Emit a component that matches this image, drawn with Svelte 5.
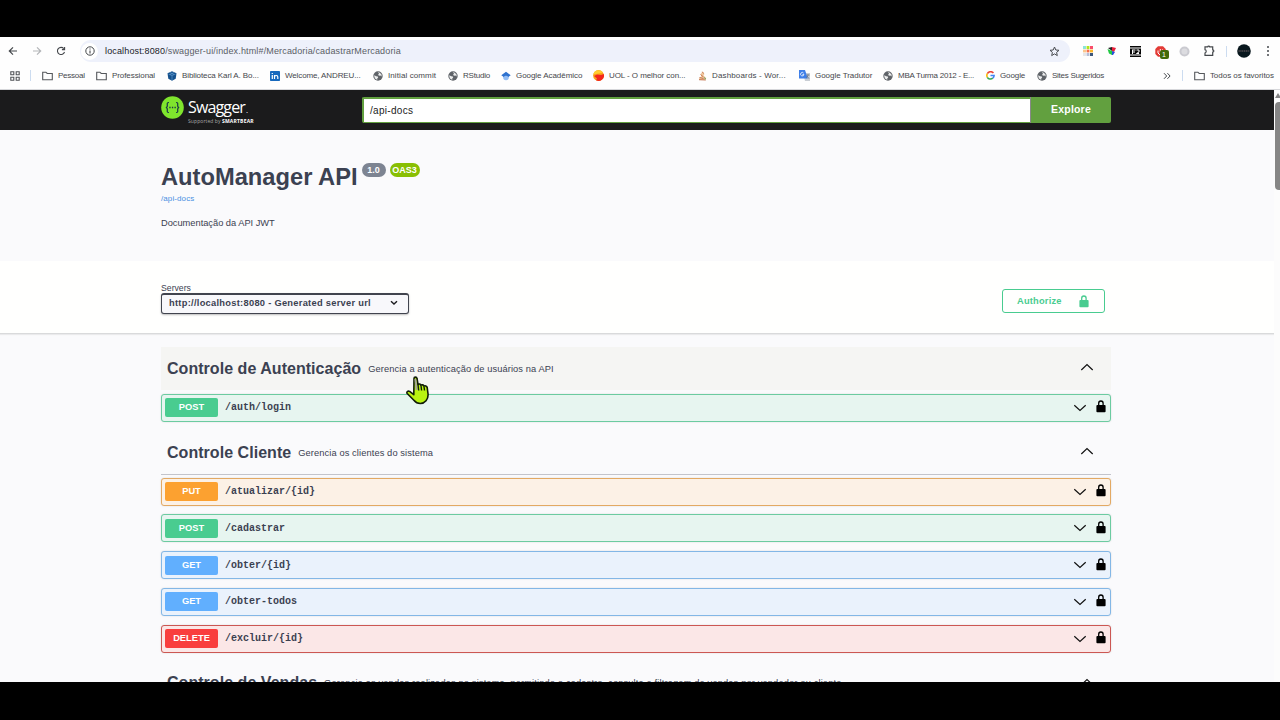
<script>
  const bookmarks = [
    { icon: 'folder', text: 'Pessoal', w: 54, sp: -0.25 },
    { icon: 'folder', text: 'Professional', w: 71, sp: -0.08 },
    { icon: 'cube', text: 'Biblioteca Karl A. Bo...', w: 103, sp: -0.1 },
    { icon: 'linkedin', text: 'Welcome, ANDREU...', w: 103, sp: -0.12 },
    { icon: 'globe', text: 'Initial commit', w: 75, sp: 0.1 },
    { icon: 'globe', text: 'RStudio', w: 53, sp: -0.2 },
    { icon: 'scholar', text: 'Google Acadêmico', w: 92, sp: -0.05 },
    { icon: 'uol', text: 'UOL - O melhor con...', w: 105, sp: -0.07 },
    { icon: 'jira', text: 'Dashboards - Wor...', w: 101, sp: 0.15 },
    { icon: 'translate', text: 'Google Tradutor', w: 84, sp: -0.03 },
    { icon: 'globe', text: 'MBA Turma 2012 - E...', w: 103, sp: -0.23 },
    { icon: 'google', text: 'Google', w: 51, sp: -0.1 },
    { icon: 'globe', text: 'Sites Sugeridos', w: 80, sp: -0.27 }
  ];
  const sections = [
    {
      title: 'Controle de Autenticação',
      text: 'Gerencia a autenticação de usuários na API',
      hover: true,
      ops: [{ method: 'POST', path: '/auth/login' }]
    },
    {
      title: 'Controle Cliente',
      text: 'Gerencia os clientes do sistema',
      ops: [
        { method: 'PUT', path: '/atualizar/{id}' },
        { method: 'POST', path: '/cadastrar' },
        { method: 'GET', path: '/obter/{id}' },
        { method: 'GET', path: '/obter-todos' },
        { method: 'DELETE', path: '/excluir/{id}' }
      ]
    },
    {
      title: 'Controle de Vendas',
      text: 'Gerencia as vendas realizadas no sistema, permitindo o cadastro, consulta e filtragem de vendas por vendedor ou cliente',
      ops: []
    }
  ];
</script>

{#snippet icon(name)}
  {#if name === 'folder'}
    <svg width="11" height="10" viewBox="0 0 11 10"><path d="M.7 1.2h3.2l1.3 1.3h5.1v6.3H.7z" fill="none" stroke="#55585c" stroke-width="1.1" /></svg>
  {:else if name === 'globe'}
    <svg width="10" height="10" viewBox="0 0 10 10"><circle cx="5" cy="5" r="4.7" fill="#5f6368" /><path d="M1.2 4.2l2 1 1.6.2.4 1.2-1 .9.2 1.3C2.500 8.500 1.200 6.800 1.200 4.200zM4.800 1.300l1.500.2 2.100 1.700.3 2.200-1.300-.9-1.500.2-.8-1.200 1-.7z" fill="#eceded" /></svg>
  {:else if name === 'cube'}
    <svg width="10" height="10" viewBox="0 0 10 10"><path d="M5 .3l4.500 2-.8 5.400L5 9.800 1.300 7.700.5 2.300z" fill="#14508c" /><path d="M1.500 3l3.500 1.500L8.500 3M5 4.500v4.800M3 1.500l4 2M7 1.500l-4 2" stroke="#6aa5d8" stroke-width=".6" fill="none" /></svg>
  {:else if name === 'linkedin'}
    <svg width="10" height="10" viewBox="0 0 10 10"><rect width="10" height="10" rx=".7" fill="#1769bd" /><path d="M2.300 4.100v4M2.300 2v1.100M4.500 8.100v-4M4.500 5.800c.3-1.800 3.300-1.800 3.300.3v2" fill="none" stroke="#fff" stroke-width="1.200" /></svg>
  {:else if name === 'scholar'}
    <svg width="10" height="10" viewBox="0 0 10 10"><circle cx="5" cy="6.500" r="2.800" fill="#93bdf4" /><path d="M5 .8l4.700 3.500L7.300 6a2.900 2.900 0 0 0-4.600 0L.3 4.300z" fill="#2f72cf" /></svg>
  {:else if name === 'uol'}
    <svg width="11" height="11" viewBox="0 0 11 11"><circle cx="5.500" cy="5.500" r="5.400" fill="#f9a01b" /><path d="M.4 4.200A5.400 5.400 0 0 1 10 2.500L6 3.500z" fill="#ffce2e" /><path d="M1 6l3-1.600L8 5l2.800-1A5.400 5.400 0 0 1 3 10.200L4 8.500z" fill="#f3281c" /></svg>
  {:else if name === 'jira'}
    <svg width="9" height="10" viewBox="0 0 9 10"><path d="M4.500.5L6.500 3 5.500 4.500 8.300 7 7 9H1.500L.8 7.800 3.500 5 2.700 3z" fill="#f0c9a0" /><path d="M1 8.700L7.800 9M4.400.8L5.500 2.500M2.500 3.500l3 2.500M1.500 6.500l4 1" stroke="#c06a43" stroke-width=".9" /><path d="M6 6.500l2 1.700" stroke="#6b9d57" /></svg>
  {:else if name === 'translate'}
    <svg width="11" height="11" viewBox="0 0 11 11"><path d="M4 3h7v8H6z" fill="#c9ced4" /><path d="M0 0h6l2.800 8.500H0z" fill="#3f7fe8" /><path d="M4.600 3.200a1.700 1.700 0 1 0 .3 1.300H3.500" fill="none" stroke="#fff" stroke-width=".8" /><path d="M7.500 5h3M9 4.400c0 2-1 3-2 3.600M8 6l2 2.700" fill="none" stroke="#6d7580" stroke-width=".8" /></svg>
  {:else if name === 'google'}
    <svg width="9" height="9" viewBox="0 0 10 10" fill="none" stroke-width="1.800"><path d="M8.200 2.300A4 4 0 0 0 1.500 3" stroke="#ea4335" /><path d="M1.500 3a4 4 0 0 0 0 4" stroke="#fbbc05" /><path d="M1.500 7a4 4 0 0 0 6 1" stroke="#34a853" /><path d="M7.500 8A4 4 0 0 0 9 5H5" stroke="#4285f4" /></svg>
  {/if}
{/snippet}

{#snippet lock()}
  <svg class="lock" width="10" height="13" viewBox="0 0 10 13"><path d="M2.700 5.500V3.200a2.200 2.200 0 0 1 4.400 0v2.300" fill="none" stroke="currentColor" stroke-width="1.300" /><rect x=".4" y="5" width="9.200" height="7.300" rx="1" fill="currentColor" /></svg>
{/snippet}

<div class="screen">
  <div class="browser">
    <div class="toolbar">
      <svg class="nav" width="10" height="10" viewBox="0 0 10 10"><path d="M9 5H1.500M5 1.300L1.300 5 5 8.700" fill="none" stroke="#45484c" stroke-width="1.200" /></svg>
      <svg class="nav" width="10" height="10" viewBox="0 0 10 10"><path d="M1 5h7.500M5 1.300L8.700 5 5 8.700" fill="none" stroke="#b3b5b8" stroke-width="1.200" /></svg>
      <svg class="nav" width="10" height="10" viewBox="0 0 10 10"><path d="M8.500 6A3.600 3.600 0 1 1 7.800 2.600M8.600.9v2.700H5.900" fill="none" stroke="#45484c" stroke-width="1.100" /></svg>
      <div class="address">
        <span class="site"><svg width="10" height="10" viewBox="0 0 10 10"><circle cx="5" cy="5" r="4.200" fill="none" stroke="#45484c" /><path d="M5 4.400v3M5 2.400v1.100" stroke="#45484c" stroke-width="1.100" /></svg></span>
        <span class="url"><b>localhost:8080</b>/swagger-ui/index.html#/Mercadoria/cadastrarMercadoria</span>
        <svg width="11" height="11" viewBox="0 0 11 11"><path d="M5.500 1l1.300 3 3.200.3-2.400 2.100.7 3.200-2.800-1.700-2.800 1.700.7-3.200L1 4.300 4.200 4z" fill="none" stroke="#484b50" /></svg>
      </div>
      <div class="extensions">
        <svg width="10" height="10" viewBox="0 0 10 10"><path d="M0 0h3v3H0z" fill="#8be5da" /><path d="M3.600 0h2.800v3H3.600z" fill="#b2e519" /><path d="M7 0h3v3H7z" fill="#f94d6b" /><path d="M0 3.600h3v2.800H0z" fill="#fac68c" /><path d="M3.600 3.600h2.800v2.800H3.600z" fill="#f56e48" /><path d="M7 3.600h3v2.800H7z" fill="#f9b52b" /><path d="M0 7h3v3H0z" fill="#e6e6e9" /><path d="M3.600 7h2.800v3H3.600z" fill="#b5bed6" /><path d="M7 7h3v3H7z" fill="#3d587d" /></svg>
        <svg width="10" height="10" viewBox="0 0 10 10"><path d="M1 2l4-1v4z" fill="#202020" /><path d="M5 1l4 1-2 4-2-1z" fill="#e8203a" /><path d="M.5 3L5 5v4L2 7.500z" fill="#22c943" /><path d="M5 5l3 1-2 3H5z" fill="#2450d8" /></svg>
        <svg width="11" height="11" viewBox="0 0 11 11"><path d="M0 0h11v11H0z" fill="#050505" /><path d="M0 2h11M0 9h11" stroke="#fff" /><path d="M2 4h3.500M2.500 4v4M2 6h3M6.500 4h2.500v2L6.500 7.500H9" fill="none" stroke="#fff" /></svg>
        <span class="blocker">
          <svg width="11" height="11" viewBox="0 0 11 11"><path d="M3 .3h5L10.700 3v5L8 10.700H3L.3 8V3z" fill="#e33b36" /><path d="M3 7V4.500M5.300 6V3M7.500 6V3.500M3 7l2 2" stroke="#fff" fill="none" /></svg>
          <span class="count">1</span>
        </span>
        <svg width="11" height="11" viewBox="0 0 11 11"><circle cx="5.500" cy="5.500" r="5" fill="#cacad0" /><circle cx="5.500" cy="5.500" r="3" fill="#dcdce0" /></svg>
        <svg width="11" height="12" viewBox="0 0 11 12"><path d="M1 1.800h2.700c.2-1 1.800-1 2 0h3v3c1.500 0 1.500 2.400 0 2.400v3.200H1V8c1.600-.2 1.600-3.100 0-3.300z" fill="none" stroke="#45484c" stroke-width="1.200" /></svg>
      </div>
      <i class="sep"></i>
      <svg class="avatar" width="14" height="14" viewBox="0 0 14 14"><circle cx="7" cy="7" r="6.800" fill="#08171d" /><path d="M1.500 7h11" stroke="#77666a" stroke-dasharray="1.300 .5" /></svg>
      <svg width="4" height="12" viewBox="0 0 4 12" fill="#45484c"><circle cx="2" cy="2" r="1" /><circle cx="2" cy="6" r="1" /><circle cx="2" cy="10" r="1" /></svg>
    </div>
    <div class="bookmarks">
      <svg class="apps" width="10" height="10" viewBox="0 0 10 10"><path d="M.8.800h3v3h-3zM6.200.800h3v3h-3zM.8 6.200h3v3h-3zM6.200 6.200h3v3h-3z" fill="none" stroke="#505357" stroke-width="1.100" /></svg>
      <i class="sep"></i>
      <div class="items">
        {#each bookmarks as b}
          <span class="mark" style="width:{b.w}px;letter-spacing:{b.sp}px">{@render icon(b.icon)}<span>{b.text}</span></span>
        {/each}
      </div>
      <svg class="more" width="8" height="8" viewBox="0 0 8 8"><path d="M1 1.200L3.700 4 1 6.800M4.400 1.200L7.100 4 4.400 6.800" fill="none" stroke="#45484c" /></svg>
      <i class="sep"></i>
      <span class="mark all">{@render icon('folder')}<span>Todos os favoritos</span></span>
    </div>

    <div class="viewport">
      <div class="page">
        <div class="topbar">
          <div class="logo">
            <svg width="23" height="23" viewBox="0 0 23 23"><circle cx="11.500" cy="11.500" r="11.300" fill="#7fe52d" /><path d="M8 6.500c-2 0-1.800.8-1.700 2.500.1 1.500-.2 2.500-1.500 2.500 1.300 0 1.600 1 1.500 2.500-.1 1.700-.3 2.500 1.700 2.500M15 6.500c2 0 1.800.8 1.700 2.500-.1 1.500.2 2.500 1.500 2.500-1.300 0-1.600 1-1.500 2.500.1 1.700.3 2.500-1.700 2.500" fill="none" stroke="#173647" stroke-width="1.200" /><path d="M8.300 11.500h1.300M10.900 11.500h1.300M13.500 11.500h1.300" stroke="#173647" stroke-width="1.300" /></svg>
            <div class="brand"><span class="name">Swagger<small>.</small></span><span class="by">Supported by <b>SMARTBEAR</b></span></div>
          </div>
          <div class="search"><span class="input">/api-docs</span><span class="explore">Explore</span></div>
        </div>
        <div class="info">
          <div class="heading"><h1>AutoManager API</h1><span class="badge">1.0</span><span class="badge oas">OAS3</span></div>
          <a class="docs" href="#/">/api-docs</a>
          <p>Documentação da API JWT</p>
        </div>
        <div class="servers">
          <div class="server">
            <span class="label">Servers</span>
            <div class="select"><span>http://localhost:8080 - Generated server url</span><svg width="8" height="6" viewBox="0 0 8 6"><path d="M1 1.200l3 2.800 3-2.800" fill="none" stroke="#1c1c20" stroke-width="1.400" /></svg></div>
          </div>
          <div class="authorize"><span>Authorize</span>{@render lock()}</div>
        </div>
        <div class="sections">
          {#each sections as s}
            <section>
              <header class:hover={s.hover}>
                <h2>{s.title}</h2><small>{s.text}</small>
                <svg width="14" height="8" viewBox="0 0 14 8"><path d="M1.300 7L7 1.500 12.700 7" fill="none" stroke="#111" stroke-width="1.200" /></svg>
              </header>
              <div class="ops">
                {#each s.ops as op}
                  <div class="op {op.method.toLowerCase()}">
                    <span class="method">{op.method}</span><code>{op.path}</code>
                    <svg width="14" height="8" viewBox="0 0 14 8"><path d="M1.300 1.300L7 6.500l5.700-5.200" fill="none" stroke="#111" stroke-width="1.200" /></svg>
                    {@render lock()}
                  </div>
                {/each}
              </div>
            </section>
          {/each}
        </div>
      </div>
      <div class="scrollbar"><i class="arrow"></i><i class="thumb"></i></div>
    </div>
  </div>
  <svg class="pointer" width="24" height="30" viewBox="0 0 24 30"><path d="M8 2.500c0-1.800 2.800-1.800 3 0l1 6c.6-.8 2.600-.6 2.900.7.800-.7 2.600-.4 3 .9 1-.7 2.900-.3 3.300 1.400l.9 7c.1 4.700-3 9-7.800 9-3 0-4.800-1.100-6.400-3.200L1.200 17.500c-1-1.600.7-3 2.400-2.100l4.200 3.300z" fill="#b9f312" stroke="#111d08" stroke-width="1.600" stroke-linejoin="round" /><path d="M9.300 3l1.300 11" stroke="#a4a0a0" stroke-width="1.700" /><path d="M12 8.500l.7 6M15 9.500l.6 5M18 10.500l.5 4" stroke="#111d08" stroke-width="1.400" /></svg>
</div>

<style>
  :global(body) { margin: 0; background: #000; }
  .screen { position: relative; box-sizing: border-box; width: 1280px; height: 720px; padding: 37px 0 38px; background: #000; font-family: "Liberation Sans", Arial, sans-serif; color: #3b4151; overflow: hidden; }
  .screen *, .screen *::before { box-sizing: border-box; }
  svg { display: block; flex: none; }
  .browser { height: 645px; display: flex; flex-direction: column; background: #fefefe; overflow: hidden; }
  .toolbar { display: flex; align-items: center; height: 28px; padding-left: 8px; flex: none; }
  .nav { margin-right: 14px; }
  .address { display: flex; align-items: center; width: 990px; height: 22px; border-radius: 11px; background: #eef1fb; padding: 0 10px 0 1px; }
  .site { display: grid; place-items: center; width: 17px; height: 17px; border-radius: 50%; background: #fff; }
  .url { flex: 1; margin-left: 7px; font-size: 9px; letter-spacing: .15px; color: #5b5e66; white-space: nowrap; }
  .url b { font-weight: 400; color: #202127; }
  .extensions { display: flex; align-items: center; gap: 13.500px; margin-left: 13px; }
  .blocker { position: relative; }
  .count { position: absolute; left: 5px; top: 4px; width: 9px; height: 9px; border-radius: 2px; background: #416a09; color: #fff; font: 7px/9px "Liberation Sans", Arial, sans-serif; text-align: center; }
  .sep { width: 1px; height: 11px; background: #ccdcf0; flex: none; }
  .toolbar .sep { margin-left: 11px; }
  .avatar { margin: 0 13px 0 10px; }
  .toolbar > svg:last-child { margin-left: 2px; }
  .bookmarks { display: flex; align-items: center; height: 25px; padding: 0 6px 3px 10px; border-bottom: 1px solid #d6d7da; flex: none; font-size: 8px; color: #45474c; }
  .bookmarks > .sep { margin-left: 10px; }
  .items { display: flex; margin-left: 11px; flex: 1; }
  .mark { display: flex; align-items: center; gap: 5px; white-space: nowrap; flex: none; }
  .more { margin-right: 1px; }
  .all { margin-left: 11px; letter-spacing: -.02px; }
  .viewport { flex: 1; min-height: 0; display: flex; background: #fafafc; }
  .page { width: 1273.500px; flex: none; overflow: hidden; }
  .topbar { height: 40px; background: #1b1b1c; display: flex; align-items: center; padding-left: 161px; }
  .logo { display: flex; width: 201px; gap: 4px; margin-top: -1px; }
  .logo > svg { margin-top: 1px; }
  .brand { display: flex; flex-direction: column; color: #fff; }
  .name { font: 16px/17px "Open Sans", sans-serif; letter-spacing: -.85px; margin-top: 4px; }
  .name small { font-size: 8px; margin-left: 1px; }
  .by { font: 5px/7px "Open Sans", sans-serif; color: #aaa; letter-spacing: .09px; white-space: nowrap; }
  .by b { color: #fff; letter-spacing: .2px; }
  .search { display: flex; width: 749px; height: 26px; }
  .input { flex: 1; background: #fff; border: 2px solid #62a03f; border-right: 0; border-bottom-width: 1px; color: #222; font-size: 10px; line-height: 24px; padding-left: 6px; letter-spacing: .3px; border-radius: 2px 0 0 2px; }
  .explore { width: 81px; border-left: 1px solid #888; border-radius: 0 2px 2px 0; background: #62a03f; color: #fff; font-size: 10.500px; font-weight: 700; line-height: 25px; text-align: center; letter-spacing: .2px; }
  .info { height: 131px; padding: 32px 0 0 161px; }
  .heading { display: flex; align-items: flex-start; height: 31px; }
  h1 { margin: 0; font-size: 23.700px; line-height: 31px; }
  .badge { margin: 1px 0 0 4px; width: 24px; height: 14px; border-radius: 7px; background: #7d8492; color: #fff; text-align: center; font-size: 9px; line-height: 15px; font-weight: 700; }
  .oas { width: 30px; background: #89bf04; }
  .docs { display: block; font-size: 8px; line-height: 11px; color: #4990e2; text-decoration: none; letter-spacing: .1px; }
  p { margin: 13px 0 0; font-size: 9.300px; line-height: 13px; letter-spacing: -.02px; }
  .servers { height: 73px; background: #fffffe; border-bottom: 1px solid #d9dadb; box-shadow: 0 1px 1px #eaeaec; padding: 0 168.500px 0 161px; display: flex; justify-content: space-between; align-items: flex-start; }
  .server { padding-top: 22px; }
  .label { display: block; font-size: 8.700px; line-height: 11px; height: 10px; }
  .select { display: flex; justify-content: space-between; align-items: center; width: 248px; height: 21px; border: 1px solid #41444e; border-top-width: 2px; border-radius: 3px; padding: 0 10px 2px 7px; background: #f8f8fb; box-shadow: 0 1px 2px #bbb; font-size: 9.300px; font-weight: 700; letter-spacing: .28px; }
  .authorize { display: flex; align-items: center; justify-content: space-between; width: 103px; height: 24px; margin-top: 28px; padding: 0 15px 0 14px; border: 1.500px solid #49cc90; border-radius: 3px; color: #49cc90; font-size: 9.300px; font-weight: 700; letter-spacing: .2px; }
  .sections { width: 950px; margin: 13px 0 0 161px; }
  section { margin-bottom: 9px; }
  header { display: flex; align-items: center; height: 44px; padding: 0 17px 0 6px; border-bottom: 1px solid #c3c4cb; white-space: nowrap; }
  header.hover { background: #f5f5f3; border-color: #fafafc; }
  header svg { margin-bottom: 3px; }
  h2 { margin: 0; font-size: 16px; line-height: 20px; letter-spacing: .04px; }
  header small { flex: 1; padding-left: 7px; font-size: 9.300px; letter-spacing: .1px; }
  section:last-child small { letter-spacing: .14px; }
  .ops { display: grid; row-gap: 8.800px; padding-top: 2.500px; }
  section:first-child .ops { padding-bottom: .5px; }
  .op { display: flex; align-items: center; height: 28px; border: 1px solid var(--b); border-radius: 3px; background: var(--bg); padding: 0 4px 0 3px; box-shadow: 0 0 2px #0002; }
  .method { width: 53px; height: 19px; border-radius: 2px; background: var(--c); color: #fff; text-align: center; font-size: 9.300px; line-height: 19px; font-weight: 700; }
  code { flex: 1; padding-left: 7px; font: 700 10px "Liberation Mono", monospace; }
  .op .lock { margin: 0 0 2px 9px; color: #000; }
  .post { --c: #49cc90; --b: #6ccba1; --bg: #e7f5f0; }
  .put { --c: #fca130; --b: #e3a963; --bg: #fcf1e6; }
  .get { --c: #61affe; --b: #83b7e6; --bg: #eaf2fc; }
  .delete { --c: #f93e3e; --b: #cc5753; --bg: #fbe7e7; }
  .scrollbar { flex: 1; background: #fcfcfc; display: flex; flex-direction: column; overflow: hidden; }
  .arrow { margin: 3px 0 4px 1px; border: 3px solid transparent; border-top: 0; border-bottom: 5px solid #858585; width: 0; }
  .thumb { width: 7px; height: 88px; margin-left: 1.500px; border-radius: 4px 0 0 4px; background: #858585; }
  .pointer { position: absolute; left: 406px; top: 376px; }
</style>
